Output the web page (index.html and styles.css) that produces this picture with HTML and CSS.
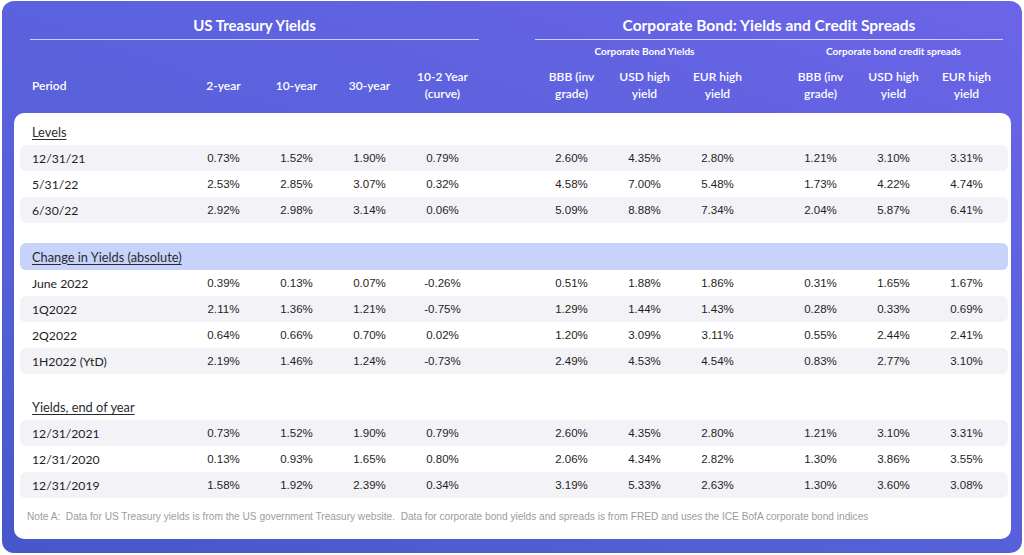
FILE: index.html
```html
<!DOCTYPE html>
<html>
<head>
<meta charset="utf-8">
<link rel="stylesheet" href="styles.css">
</head>
<body>
<div class="card">
  <div class="head grid">
    <div class="grp grp-left">US Treasury Yields</div>
    <div class="grp grp-right">Corporate Bond: Yields and Credit Spreads</div>
    <div class="sub sub-yields">Corporate Bond Yields</div>
    <div class="sub sub-spreads">Corporate bond credit spreads</div>
    <div class="ch ch-period">Period</div>
    <div class="ch c2">2-year</div>
    <div class="ch c3">10-year</div>
    <div class="ch c4">30-year</div>
    <div class="ch c5">10-2 Year<br>(curve)</div>
    <div class="ch c7">BBB (inv<br>grade)</div>
    <div class="ch c8">USD high<br>yield</div>
    <div class="ch c9">EUR high<br>yield</div>
    <div class="ch c11">BBB (inv<br>grade)</div>
    <div class="ch c12">USD high<br>yield</div>
    <div class="ch c13">EUR high<br>yield</div>
  </div>

  <div class="panel">
    <div class="label"><span>Levels</span></div>
    <div class="row grid alt"><span class="p">12/31/21</span><span class="c2">0.73%</span><span class="c3">1.52%</span><span class="c4">1.90%</span><span class="c5">0.79%</span><span class="c7">2.60%</span><span class="c8">4.35%</span><span class="c9">2.80%</span><span class="c11">1.21%</span><span class="c12">3.10%</span><span class="c13">3.31%</span></div>
    <div class="row grid"><span class="p">5/31/22</span><span class="c2">2.53%</span><span class="c3">2.85%</span><span class="c4">3.07%</span><span class="c5">0.32%</span><span class="c7">4.58%</span><span class="c8">7.00%</span><span class="c9">5.48%</span><span class="c11">1.73%</span><span class="c12">4.22%</span><span class="c13">4.74%</span></div>
    <div class="row grid alt"><span class="p">6/30/22</span><span class="c2">2.92%</span><span class="c3">2.98%</span><span class="c4">3.14%</span><span class="c5">0.06%</span><span class="c7">5.09%</span><span class="c8">8.88%</span><span class="c9">7.34%</span><span class="c11">2.04%</span><span class="c12">5.87%</span><span class="c13">6.41%</span></div>

    <div class="label band"><span>Change in Yields (absolute)</span></div>
    <div class="row grid"><span class="p">June 2022</span><span class="c2">0.39%</span><span class="c3">0.13%</span><span class="c4">0.07%</span><span class="c5">-0.26%</span><span class="c7">0.51%</span><span class="c8">1.88%</span><span class="c9">1.86%</span><span class="c11">0.31%</span><span class="c12">1.65%</span><span class="c13">1.67%</span></div>
    <div class="row grid alt"><span class="p">1Q2022</span><span class="c2">2.11%</span><span class="c3">1.36%</span><span class="c4">1.21%</span><span class="c5">-0.75%</span><span class="c7">1.29%</span><span class="c8">1.44%</span><span class="c9">1.43%</span><span class="c11">0.28%</span><span class="c12">0.33%</span><span class="c13">0.69%</span></div>
    <div class="row grid"><span class="p">2Q2022</span><span class="c2">0.64%</span><span class="c3">0.66%</span><span class="c4">0.70%</span><span class="c5">0.02%</span><span class="c7">1.20%</span><span class="c8">3.09%</span><span class="c9">3.11%</span><span class="c11">0.55%</span><span class="c12">2.44%</span><span class="c13">2.41%</span></div>
    <div class="row grid alt"><span class="p">1H2022 (YtD)</span><span class="c2">2.19%</span><span class="c3">1.46%</span><span class="c4">1.24%</span><span class="c5">-0.73%</span><span class="c7">2.49%</span><span class="c8">4.53%</span><span class="c9">4.54%</span><span class="c11">0.83%</span><span class="c12">2.77%</span><span class="c13">3.10%</span></div>

    <div class="label gap"><span>Yields, end of year</span></div>
    <div class="row grid alt"><span class="p">12/31/2021</span><span class="c2">0.73%</span><span class="c3">1.52%</span><span class="c4">1.90%</span><span class="c5">0.79%</span><span class="c7">2.60%</span><span class="c8">4.35%</span><span class="c9">2.80%</span><span class="c11">1.21%</span><span class="c12">3.10%</span><span class="c13">3.31%</span></div>
    <div class="row grid"><span class="p">12/31/2020</span><span class="c2">0.13%</span><span class="c3">0.93%</span><span class="c4">1.65%</span><span class="c5">0.80%</span><span class="c7">2.06%</span><span class="c8">4.34%</span><span class="c9">2.82%</span><span class="c11">1.30%</span><span class="c12">3.86%</span><span class="c13">3.55%</span></div>
    <div class="row grid alt"><span class="p">12/31/2019</span><span class="c2">1.58%</span><span class="c3">1.92%</span><span class="c4">2.39%</span><span class="c5">0.34%</span><span class="c7">3.19%</span><span class="c8">5.33%</span><span class="c9">2.63%</span><span class="c11">1.30%</span><span class="c12">3.60%</span><span class="c13">3.08%</span></div>

    <div class="note">Note A:&nbsp; Data for US Treasury yields is from the US government Treasury website.&nbsp; Data for corporate bond yields and spreads is from FRED and uses the ICE BofA corporate bond indices</div>
  </div>
</div>
</body>
</html>
```

FILE: styles.css
```css
* { box-sizing: border-box; }
html, body { margin: 0; padding: 0; background: #ffffff; }
body { width: 1024px; height: 555px; overflow: hidden; }

.card {
  margin: 1px 0 0 2px;
  width: 1020px;
  height: 552px;
  border-radius: 12px;
  padding: 14px 11px 0 12px;
  background: linear-gradient(200deg, #6c64e8 0%, #5d62de 35%, #5360d6 70%, #4557ca 100%);
  font-family: Lato, "Liberation Sans", sans-serif;
}

.grid {
  display: grid;
  grid-template-columns: 167px repeat(4, 73px) 56px repeat(3, 73px) 30px repeat(3, 73px);
}

.head {
  padding-left: 6px;
  color: #ffffff;
}

.grp {
  grid-row: 1;
  font-weight: 700;
  font-size: 15px;
  line-height: 20px;
  text-align: center;
  padding-bottom: 4px;
  border-bottom: 1px solid rgba(255, 255, 255, 0.7);
}
.grp-left { grid-column: 1 / 6; margin-left: 10px; }
.grp-right { grid-column: 7 / 14; font-size: 15.5px; }

.sub {
  grid-row: 2;
  font-weight: 700;
  font-size: 10px;
  line-height: 14px;
  text-align: center;
  margin-top: 4px;
}
.sub-yields { grid-column: 7 / 10; }
.sub-spreads { grid-column: 11 / 14; }

.ch {
  grid-row: 3;
  margin-top: 10px;
  font-size: 12px;
  line-height: 17px;
  font-weight: 600;
  text-align: center;
  align-self: center;
}
.ch-period { grid-column: 1; text-align: left; padding-left: 12px; }

.c2 { grid-column: 2; }
.c3 { grid-column: 3; }
.c4 { grid-column: 4; }
.c5 { grid-column: 5; }
.c7 { grid-column: 7; }
.c8 { grid-column: 8; }
.c9 { grid-column: 9; }
.c11 { grid-column: 11; }
.c12 { grid-column: 12; }
.c13 { grid-column: 13; }

.panel {
  margin-top: 11px;
  width: 997px;
  height: 426px;
  background: #ffffff;
  border-radius: 10px;
  padding: 6px 3px 0 6px;
}

.label {
  height: 26px;
  display: flex;
  align-items: center;
  padding-left: 12px;
  font-size: 12.8px;
  color: #2b2b2b;
}
.label span { text-decoration: underline; text-underline-offset: 2px; }
.label.band {
  margin-top: 20px;
  height: 27px;
  background: #c8d3fb;
  border-radius: 6px;
}
.label.gap { margin-top: 20px; }

.row {
  height: 26px;
  align-items: center;
  font-size: 12px;
  color: #1e1e1e;
  border-radius: 6px;
}
.row.alt { background: #f3f3f7; }
.row span {
  text-align: center;
  font-family: "Liberation Sans", Arial, sans-serif;
  font-size: 11.5px;
}
.row span.p {
  grid-column: 1;
  text-align: left;
  padding-left: 12px;
  font-family: Lato, "Liberation Sans", sans-serif;
  font-size: 12.2px;
}

.note {
  margin-top: 13px;
  padding-left: 7px;
  font-family: "Liberation Sans", Arial, sans-serif;
  font-size: 10.15px;
  color: #9c9c9c;
  white-space: nowrap;
}
```
